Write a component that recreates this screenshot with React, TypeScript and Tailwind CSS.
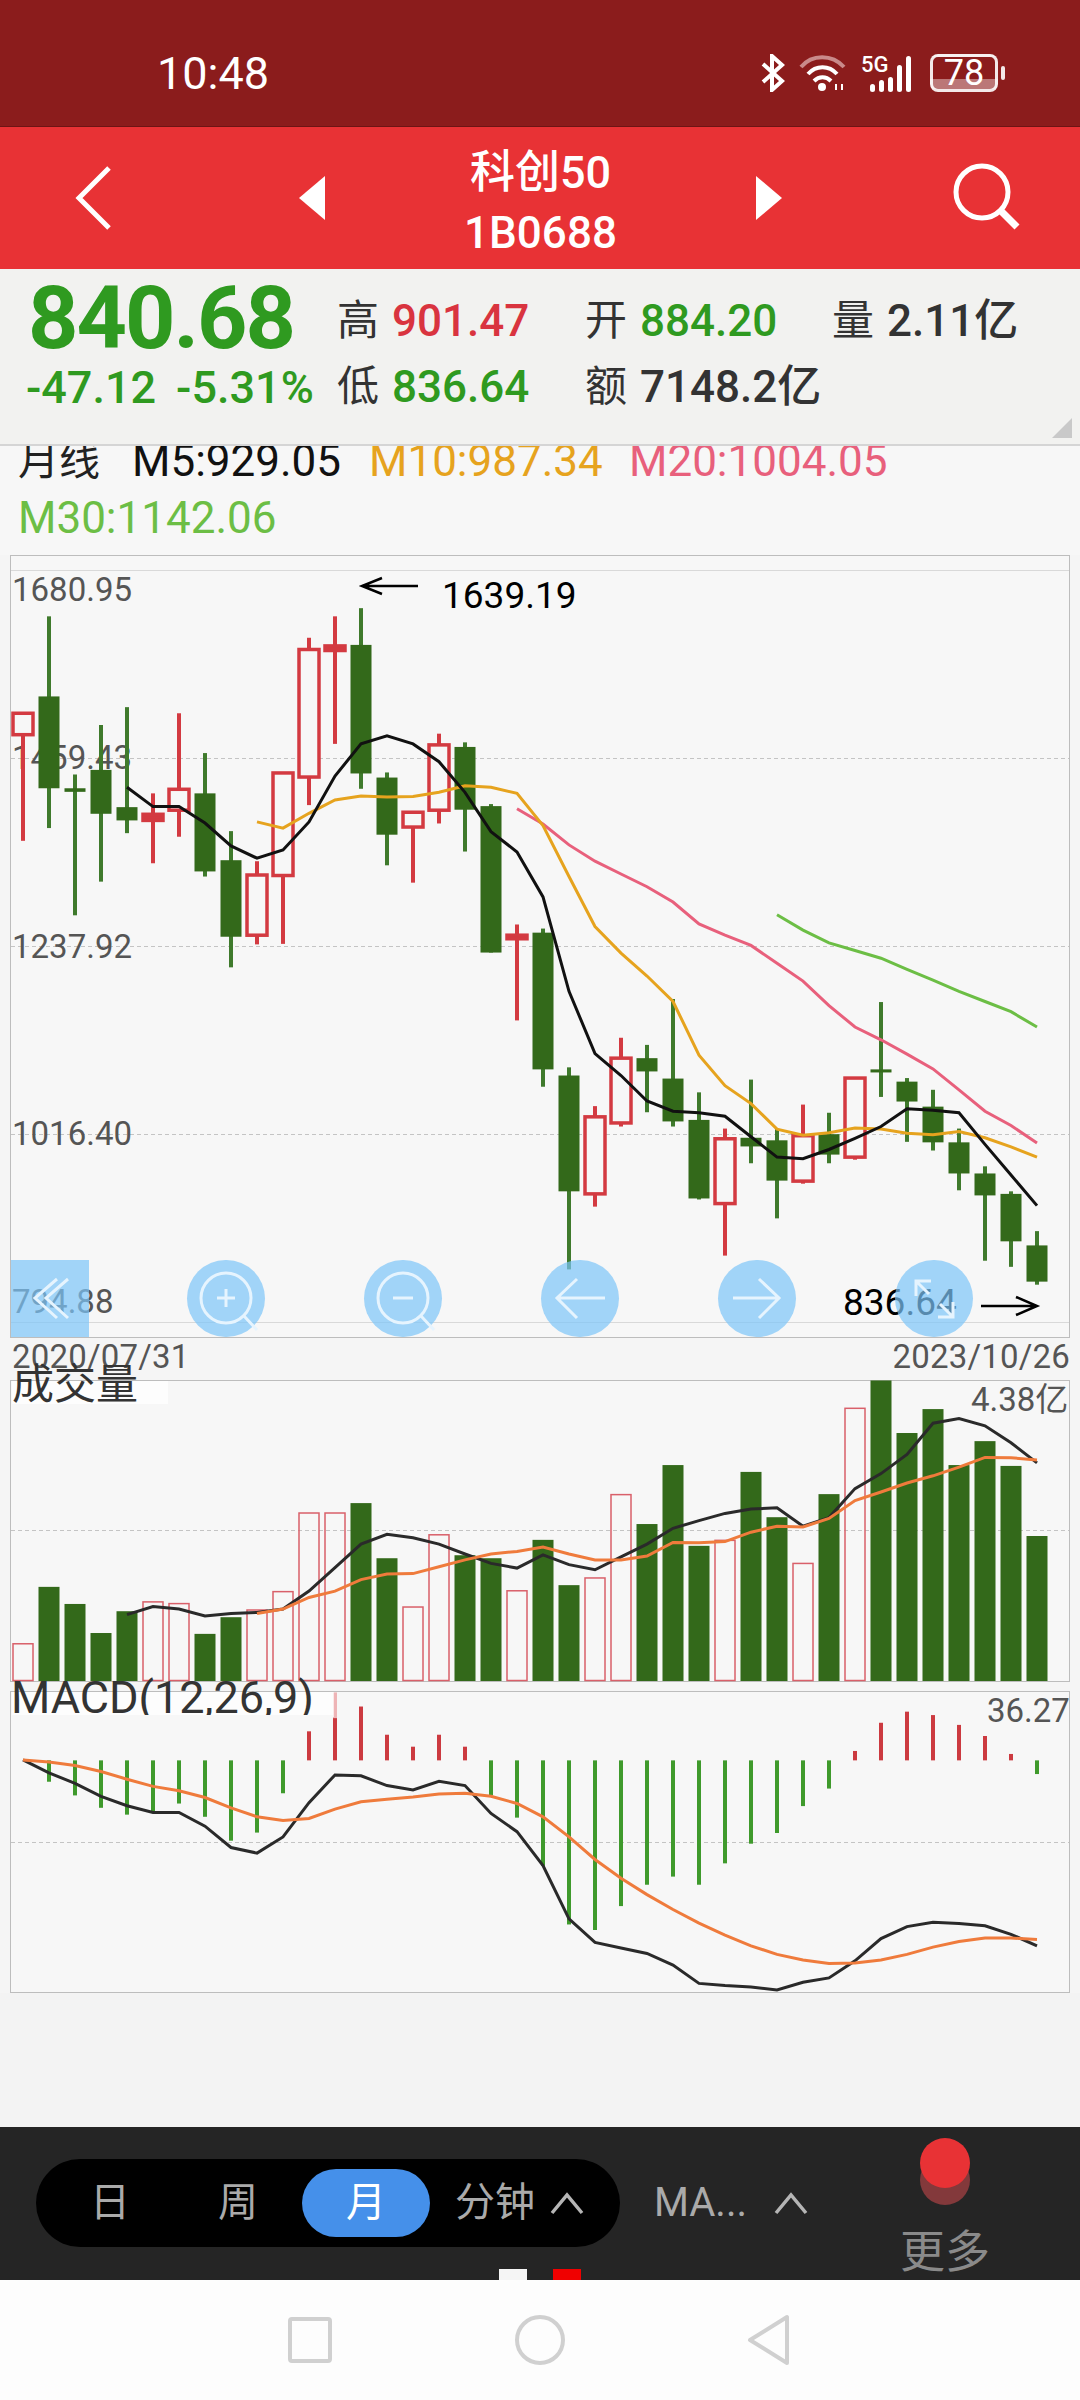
const GREEN = "#33691a";
const WICK_G = "#3f7a2c";
const RED = "#d33a41";

const xAt = (i: number) => 23 + 26 * i;
// the y values below were read off a stretched crop, these bring them back to page pixels
const ky = (v: number) => 550 + v / 1.96;
const ly = (v: number) => 1340 + v / 2.34;

// color, wick top, body top, body bottom, wick bottom
const candles: [string, number, number, number, number][] = [
  ["r", 320, 320, 362, 570], ["g", 130, 287, 467, 545], ["g", 440, 467, 474, 716], ["g", 343, 431, 517, 650],
  ["g", 308, 504, 530, 555], ["r", 477, 518, 530, 614], ["r", 320, 469, 510, 562], ["g", 398, 477, 630, 640],
  ["g", 551, 608, 758, 818], ["r", 610, 637, 755, 773], ["r", 437, 437, 638, 772], ["r", 172, 195, 445, 500],
  ["r", 130, 188, 197, 380], ["g", 114, 186, 438, 468], ["g", 436, 446, 558, 618], ["r", 512, 514, 543, 652],
  ["r", 360, 382, 510, 536], ["g", 377, 386, 509, 591], ["g", 498, 502, 789, 789], ["r", 734, 755, 762, 922],
  ["g", 742, 750, 1018, 1052], ["g", 1014, 1030, 1257, 1410], ["r", 1090, 1111, 1262, 1287], ["r", 956, 996, 1123, 1130],
  ["g", 970, 996, 1022, 1102], ["g", 880, 1036, 1120, 1130], ["g", 1063, 1117, 1271, 1273], ["r", 1134, 1154, 1281, 1383],
  ["g", 1038, 1152, 1169, 1202], ["g", 1135, 1157, 1236, 1310], ["r", 1087, 1148, 1237, 1242], ["g", 1103, 1145, 1185, 1202],
  ["r", 1035, 1035, 1190, 1195], ["g", 886, 1018, 1024, 1072], ["g", 1035, 1042, 1081, 1160], ["g", 1058, 1091, 1161, 1177],
  ["g", 1134, 1161, 1222, 1255], ["g", 1208, 1222, 1265, 1393], ["g", 1257, 1262, 1355, 1405], ["g", 1335, 1363, 1434, 1440],
];

const ma5 = [465, 503, 503, 535, 580, 604, 588, 533, 443, 380, 364, 380, 415, 475, 552, 592, 680, 865, 987, 1030, 1080, 1100, 1103, 1110, 1150, 1190, 1193, 1175, 1153, 1130, 1095, 1098, 1103, 1165, 1225, 1285];
const ma10 = [533, 545, 516, 490, 482, 484, 483, 475, 462, 465, 477, 540, 640, 738, 790, 835, 885, 990, 1050, 1085, 1135, 1147, 1142, 1133, 1135, 1143, 1146, 1140, 1152, 1170, 1190];
const ma20 = [507, 537, 578, 610, 635, 660, 690, 733, 755, 775, 810, 845, 893, 935, 960, 988, 1017, 1058, 1100, 1128, 1162];
const ma30 = [715, 745, 770, 785, 800, 822, 843, 865, 885, 905, 935];

const volumes: [string, number][] = [
  ["r", 712], ["g", 580], ["g", 620], ["g", 688], ["g", 637], ["r", 614], ["r", 618], ["g", 690], ["g", 651], ["r", 633],
  ["r", 590], ["r", 406], ["r", 406], ["g", 384], ["g", 513], ["r", 626], ["r", 457], ["g", 506], ["g", 513], ["r", 588],
  ["g", 470], ["g", 576], ["r", 558], ["r", 363], ["g", 433], ["g", 295], ["g", 484], ["r", 470], ["g", 311], ["g", 417],
  ["r", 524], ["g", 363], ["r", 161], ["g", 97], ["g", 220], ["g", 164], ["g", 295], ["g", 239], ["g", 297], ["g", 461],
];
const volMa5 = [645, 626, 632, 648, 642, 640, 632, 590, 535, 480, 457, 465, 480, 503, 525, 536, 505, 528, 540, 510, 480, 443, 425, 408, 398, 395, 438, 418, 350, 315, 270, 197, 186, 203, 243, 290];
const volMa10 = [642, 632, 605, 590, 563, 550, 549, 533, 517, 503, 497, 487, 503, 517, 517, 508, 476, 477, 474, 452, 438, 440, 420, 378, 358, 337, 320, 300, 277, 278, 283];

const macdBars = [986, 1036, 1068, 1097, 1113, 1107, 1087, 1118, 1174, 1155, 1063, 918, 887, 860, 926, 954, 926, 954, 1068, 1120, 1233, 1370, 1383, 1327, 1277, 1258, 1277, 1227, 1181, 1156, 1093, 1052, 964, 898, 872, 880, 903, 929, 971, 1018];
const dif = [985, 1015, 1040, 1070, 1092, 1108, 1108, 1140, 1190, 1203, 1165, 1085, 1020, 1022, 1045, 1055, 1035, 1045, 1110, 1153, 1232, 1357, 1412, 1425, 1438, 1465, 1508, 1513, 1516, 1523, 1505, 1495, 1455, 1403, 1375, 1365, 1368, 1373, 1393, 1420];
const dea = [985, 990, 998, 1012, 1030, 1047, 1057, 1073, 1097, 1118, 1127, 1122, 1100, 1083, 1077, 1072, 1065, 1063, 1070, 1087, 1118, 1165, 1218, 1262, 1300, 1335, 1367, 1395, 1420, 1440, 1453, 1461, 1460, 1453, 1440, 1423, 1410, 1402, 1402, 1405];

const linePoints = (vals: number[], toY: (v: number) => number) => {
  const start = 40 - vals.length;
  return vals.map((v, i) => `${xAt(start + i)},${toY(v).toFixed(1)}`).join(" ");
};

function KLine() {
  return (
    <svg className="block" width="1058" height="781" viewBox="11 556 1058 781">
      <line x1="11" x2="1069" y1="570.5" y2="570.5" stroke="#d9d9d9" />
      <line x1="11" x2="1069" y1="1322.5" y2="1322.5" stroke="#d9d9d9" />
      {[758.5, 946.5, 1134.5].map((y) => (
        <line key={y} x1="11" x2="1069" y1={y} y2={y} stroke="#c4c4c4" strokeDasharray="4 3" />
      ))}
      <g className="text-[33px]" fill="#555555" fontFamily="Roboto, sans-serif">
        <text x="12" y="601">1680.95</text>
        <text x="12" y="769">1459.43</text>
        <text x="12" y="958">1237.92</text>
        <text x="12" y="1145">1016.40</text>
        <text x="12" y="1313">794.88</text>
      </g>
      {candles.map(([c, wt, bt, bb, wb], i) => {
        const x = xAt(i);
        const top = ky(bt);
        const h = Math.max(ky(bb) - top, 2);
        if (c === "g")
          return (
            <g key={i}>
              <line x1={x} x2={x} y1={ky(wt)} y2={ky(wb)} stroke={WICK_G} strokeWidth="4" />
              <rect x={x - 10.5} y={top} width="21" height={h} fill={GREEN} />
            </g>
          );
        return (
          <g key={i}>
            <line x1={x} x2={x} y1={ky(wt)} y2={top} stroke={RED} strokeWidth="4" />
            <line x1={x} x2={x} y1={ky(bb)} y2={ky(wb)} stroke={RED} strokeWidth="4" />
            <rect x={x - 10} y={top} width="20" height={h} fill={h < 8 ? RED : "#f7f7f7"} stroke={RED} strokeWidth="3.5" />
          </g>
        );
      })}
      <polyline points={linePoints(ma30, ky)} fill="none" stroke="#6cbe45" strokeWidth="3" />
      <polyline points={linePoints(ma20, ky)} fill="none" stroke="#e8607c" strokeWidth="3" />
      <polyline points={linePoints(ma10, ky)} fill="none" stroke="#e6a31e" strokeWidth="3" />
      <polyline points={linePoints(ma5, ky)} fill="none" stroke="#111111" strokeWidth="3" />
      <g stroke="#000000" strokeWidth="2.5" fill="none">
        <path d="M418 586H362M382 578L362 586L382 594" />
        <path d="M981 1306H1037M1016 1297L1037 1306L1016 1315" />
      </g>
      <g className="text-[37px]" fill="#000000" fontFamily="Roboto, sans-serif">
        <text x="442" y="608">1639.19</text>
        <text x="843" y="1315">836.64</text>
      </g>
    </svg>
  );
}

function Volume() {
  return (
    <svg className="block overflow-visible" width="1058" height="300" viewBox="11 1382 1058 300">
      <line x1="11" x2="1069" y1="1531.5" y2="1531.5" stroke="#c4c4c4" strokeDasharray="4 3" />
      {volumes.map(([c, top], i) => {
        const x = xAt(i);
        const y = ly(top);
        if (c === "g") return <rect key={i} x={x - 10.5} y={y} width="21" height={1682 - y} fill={GREEN} />;
        return <rect key={i} x={x - 10} y={y + 0.5} width="20" height={1681 - y} fill="none" stroke="#d9606a" strokeWidth="1.5" />;
      })}
      <polyline points={linePoints(volMa5, ly)} fill="none" stroke="#2a2a2a" strokeWidth="3" />
      <polyline points={linePoints(volMa10, ly)} fill="none" stroke="#ef7b3c" strokeWidth="3" />
      <rect x="12" y="1382" width="156" height="23" fill="#ffffff" opacity="0.7" />
      <text x="12" y="1400" className="text-[42px]" fill="#333333" fontFamily="'Noto Sans CJK SC', sans-serif">成交量</text>
      <text x="971" y="1412" className="text-[33px]" fill="#555555" fontFamily="Roboto, 'Noto Sans CJK SC', sans-serif">4.38亿</text>
    </svg>
  );
}

function Macd() {
  return (
    <svg className="block overflow-visible" width="1058" height="300" viewBox="11 1693 1058 300">
      <line x1="11" x2="1069" y1="1843.5" y2="1843.5" stroke="#c4c4c4" strokeDasharray="4 3" />
      {macdBars.map((v, i) => {
        if (i === 0) return null;
        const up = v < 986;
        const y1 = ly(986);
        const y2 = ly(v);
        return <line key={i} x1={xAt(i)} x2={xAt(i)} y1={y1} y2={y2} stroke={up ? "#cc3a40" : "#3f9a2c"} strokeWidth="4" />;
      })}
      <line x1={xAt(12)} x2={xAt(12)} y1={ly(827)} y2={ly(887)} stroke="#eeb4b6" strokeWidth="4" />
      <polyline points={linePoints(dif, ly)} fill="none" stroke="#2a2a2a" strokeWidth="3" />
      <polyline points={linePoints(dea, ly)} fill="none" stroke="#ef7b3c" strokeWidth="3" />
      <rect x="12" y="1693" width="322" height="25" fill="#ffffff" opacity="0.7" />
      <text x="11" y="1714" className="text-[45px]" fill="#333333" fontFamily="Roboto, sans-serif">MACD(12,26,9)</text>
      <rect x="11" y="1716" width="322" height="10" fill="#f7f7f7" />
      <text x="987" y="1723" className="text-[33px]" fill="#555555" fontFamily="Roboto, sans-serif">36.27</text>
    </svg>
  );
}

function ChartButtons() {
  const stroke = { stroke: "#e6f4fe", strokeWidth: 3, fill: "none" };
  return (
    <div className="absolute left-0 right-0 bottom-0 h-[77px]">
      <button className="absolute left-0 top-0 w-[78px] h-[77px] bg-[#7cc4f8]/70">
        <svg width="78" height="77" {...stroke}>
          <path d="M46 19L24 38L46 58M57 19L35 38L57 58" />
        </svg>
      </button>
      <button className="absolute left-[176px] top-0 w-[78px] h-[77px] rounded-full bg-[#7cc4f8]/70">
        <svg width="78" height="77" {...stroke}>
          <circle cx="39" cy="38" r="25" />
          <path d="M57 56L70 70M30 38H48M39 29V47" />
        </svg>
      </button>
      <button className="absolute left-[353px] top-0 w-[78px] h-[77px] rounded-full bg-[#7cc4f8]/70">
        <svg width="78" height="77" {...stroke}>
          <circle cx="39" cy="38" r="25" />
          <path d="M57 56L70 70M29 38H49" />
        </svg>
      </button>
      <button className="absolute left-[530px] top-0 w-[78px] h-[77px] rounded-full bg-[#7cc4f8]/70">
        <svg width="78" height="77" {...stroke}>
          <path d="M64 38H16M36 19L16 38L36 58" />
        </svg>
      </button>
      <button className="absolute left-[707px] top-0 w-[78px] h-[77px] rounded-full bg-[#7cc4f8]/70">
        <svg width="78" height="77" {...stroke}>
          <path d="M15 38H61M41 19L61 38L41 58" />
        </svg>
      </button>
      <button className="absolute left-[884px] top-0 w-[78px] h-[77px] rounded-full bg-[#7cc4f8]/70">
        <svg width="78" height="77" {...stroke}>
          <path d="M21 36V21H36M21 21L34 34M58 42V57H43M58 57L45 44" />
        </svg>
      </button>
    </div>
  );
}

function StatusIcons() {
  return (
    <div className="flex items-center">
      <svg width="26" height="38" viewBox="0 0 26 38" fill="none" stroke="white" strokeWidth="4">
        <path d="M3 10L22 27L12 36V2L22 11L3 28" />
      </svg>
      <svg className="ml-[12px]" width="50" height="38" viewBox="0 0 50 38" fill="none">
        <path d="M3 13C14 0 34 0 46 13" stroke="#c98a8a" strokeWidth="4" />
        <path d="M10 20C18 11 31 11 39 20" stroke="white" strokeWidth="4" />
        <path d="M16 27C21 22 28 22 33 27" stroke="white" strokeWidth="4" />
        <circle cx="24" cy="33" r="4" fill="white" />
        <path d="M38 36V30M44 36V30" stroke="white" strokeWidth="2" />
      </svg>
      <div className="relative ml-[13px] w-[56px] h-[38px]">
        <span className="absolute left-0 top-0 text-[22px] leading-none font-medium text-white">5G</span>
        <div className="absolute left-[9px] bottom-0 flex items-end gap-[4px]">
          <i className="block w-[5px] h-[8px] rounded-full bg-white" />
          <i className="block w-[5px] h-[12px] rounded-full bg-white" />
          <i className="block w-[5px] h-[15px] rounded-full bg-white" />
          <i className="block w-[5px] h-[27px] rounded-full bg-white" />
          <i className="block w-[5px] h-[36px] rounded-full bg-white" />
        </div>
      </div>
      <div className="ml-[13px] w-[68px] h-[38px] rounded-[8px] border-[3px] border-white/90 bg-gradient-to-b from-[#8b1c1c] from-70% to-[#b77] to-70% flex items-center justify-center text-white text-[36px] leading-none">78</div>
      <div className="ml-[3px] w-[4px] h-[14px] rounded-full bg-white/90" />
    </div>
  );
}

function Stat({ label, value, color }: { label: string; value: string; color: string }) {
  return (
    <div className="flex items-center">
      <span className="w-[55px] text-[42px] leading-none text-[#333333]">{label}</span>
      <span className={`text-[44px] leading-none font-medium ${color}`}>{value}</span>
    </div>
  );
}

function Tab({ label, active }: { label: string; active?: boolean }) {
  return (
    <div className={`w-[128px] h-[68px] rounded-full flex items-center justify-center text-[40px] leading-none ${active ? "bg-[#4590ea] text-white" : "text-[#aaaaaa]"}`}>
      {label}
    </div>
  );
}

function Caret({ className }: { className: string }) {
  return (
    <svg className={className} width="34" height="24" viewBox="0 0 34 24" fill="none" stroke="#b5b5b5" strokeWidth="3.5">
      <path d="M2 22L17 4L32 22" />
    </svg>
  );
}

export default function App() {
  return (
    <div className="w-[1080px] h-[2400px] flex flex-col overflow-hidden bg-[#f5f5f5] font-[Roboto,'Noto_Sans_CJK_SC',sans-serif]">
      <div className="h-[127px] bg-[#8b1c1c] flex items-center justify-between pt-[20px] pl-[157px] pr-[75px] border-b border-[#6e1414]">
        <span className="text-[45px] leading-none text-white">10:48</span>
        <StatusIcons />
      </div>

      <header className="h-[142px] bg-[#e83235] flex items-center text-white">
        <svg className="ml-[72px]" width="42" height="64" viewBox="0 0 42 64" fill="none" stroke="white" strokeWidth="5">
          <path d="M37 2L7 32L37 62" />
        </svg>
        <svg className="ml-[184px]" width="28" height="44" viewBox="0 0 28 44" fill="white">
          <path d="M27 0V44L1 22Z" />
        </svg>
        <div className="w-[429px] pt-[6px] flex flex-col items-center gap-[17px] font-medium">
          <span className="text-[45px] leading-[46px]">科创50</span>
          <span className="text-[44px] leading-[40px]">1B0688</span>
        </div>
        <svg width="28" height="44" viewBox="0 0 28 44" fill="white">
          <path d="M1 0V44L27 22Z" />
        </svg>
        <svg className="ml-[168px]" width="70" height="70" viewBox="0 0 70 70" fill="none" stroke="white">
          <circle cx="31" cy="29" r="26" strokeWidth="5" />
          <path d="M50 48L66 64" strokeWidth="7" />
        </svg>
      </header>

      <section className="relative h-[177px] bg-[#f2f2f0] border-b-2 border-[#d5d5d5] pt-[19px] grid grid-cols-[337px_248px_247px_1fr] grid-rows-[66px_66px]">
        <div className="pl-[28px] -mt-[3px] text-[88px] leading-[66px] font-bold tracking-[-2px] text-[#2f9a20]">840.68</div>
        <Stat label="高" value="901.47" color="text-[#d9343f]" />
        <Stat label="开" value="884.20" color="text-[#2f9a20]" />
        <Stat label="量" value="2.11亿" color="text-[#333333]" />
        <div className="pl-[26px] flex items-center gap-[20px] text-[45px] leading-none font-medium text-[#2f9a20]">
          <span>-47.12</span>
          <span>-5.31%</span>
        </div>
        <Stat label="低" value="836.64" color="text-[#2f9a20]" />
        <Stat label="额" value="7148.2亿" color="text-[#333333]" />
        <div className="absolute right-[8px] bottom-[6px] w-0 h-0 border-l-[20px] border-l-transparent border-b-[20px] border-b-[#c9c9c9]" />
      </section>

      <div className="h-[109px] pl-[18px] bg-[#f7f7f7] text-[44px] leading-[57px]">
        <div className="-mt-[13px] flex gap-[30px] whitespace-nowrap">
          <span className="w-[84px] text-[41px] text-[#222222]">月线</span>
          <span className="w-[207px] text-[#111111]">M5:929.05</span>
          <span className="w-[230px] text-[#e6a31e]">M10:987.34</span>
          <span className="text-[#e8607c]">M20:1004.05</span>
        </div>
        <div className="text-[#6cbe45]">M30:1142.06</div>
      </div>

      <div className="relative mx-[10px] h-[783px] border border-[#bdbdbd] bg-[#f7f7f7]">
        <KLine />
        <ChartButtons />
      </div>

      <div className="mx-[12px] h-[43px] -mb-[4px] flex justify-between items-start text-[33px] leading-[38px] tracking-[0.2px] text-[#555555]">
        <span>2020/07/31</span>
        <span className="-mr-[2px]">2023/10/26</span>
      </div>

      <div className="mx-[10px] mt-[3px] h-[302px] border border-[#bdbdbd] bg-[#f7f7f7]">
        <Volume />
      </div>

      <div className="mx-[10px] mt-[9px] h-[302px] border border-[#bdbdbd] bg-[#f7f7f7]">
        <Macd />
      </div>

      <div className="flex-1 bg-[#f3f3f3]" />

      <div className="relative h-[153px] bg-[#252525] flex items-start pl-[36px]">
        <div className="mt-[32px] w-[584px] h-[88px] rounded-full bg-black flex items-center pl-[10px] text-[#aaaaaa]">
          <Tab label="日" />
          <Tab label="周" />
          <Tab label="月" active />
          <span className="ml-[25px] text-[40px] leading-none">分钟</span>
          <Caret className="ml-[15px]" />
        </div>
        <span className="mt-[56px] ml-[34px] text-[40px] leading-none text-[#aaaaaa]">MA...</span>
        <Caret className="mt-[64px] ml-[27px]" />
        <div className="absolute left-[880px] top-[11px] w-[130px] flex flex-col items-center">
          <div className="relative w-[50px] h-[67px]">
            <div className="absolute left-0 top-[17px] w-[50px] h-[50px] rounded-full bg-[#83393b]" />
            <div className="absolute left-0 top-0 w-[50px] h-[50px] rounded-full bg-[#e83235]" />
          </div>
          <span className="mt-[25px] text-[45px] leading-[45px] text-[#8a8a8a]">更多</span>
        </div>
        <div className="absolute left-[499px] bottom-0 w-[28px] h-[11px] bg-[#f5f5f5]" />
        <div className="absolute left-[553px] bottom-0 w-[28px] h-[11px] bg-[#f00000]" />
      </div>

      <nav className="h-[120px] bg-[#fdfdfd] flex items-center">
        <svg className="ml-[286px]" width="48" height="48" viewBox="0 0 48 48" fill="none" stroke="#d0d0d0" strokeWidth="4">
          <rect x="4" y="3" width="40" height="42" rx="2" />
        </svg>
        <svg className="ml-[180px]" width="52" height="52" viewBox="0 0 52 52" fill="none" stroke="#d0d0d0" strokeWidth="4">
          <circle cx="26" cy="26" r="23" />
        </svg>
        <svg className="ml-[180px]" width="46" height="52" viewBox="0 0 46 52" fill="none" stroke="#d0d0d0" strokeWidth="4" strokeLinejoin="round">
          <path d="M41 3V49L4 26Z" />
        </svg>
      </nav>
    </div>
  );
}
